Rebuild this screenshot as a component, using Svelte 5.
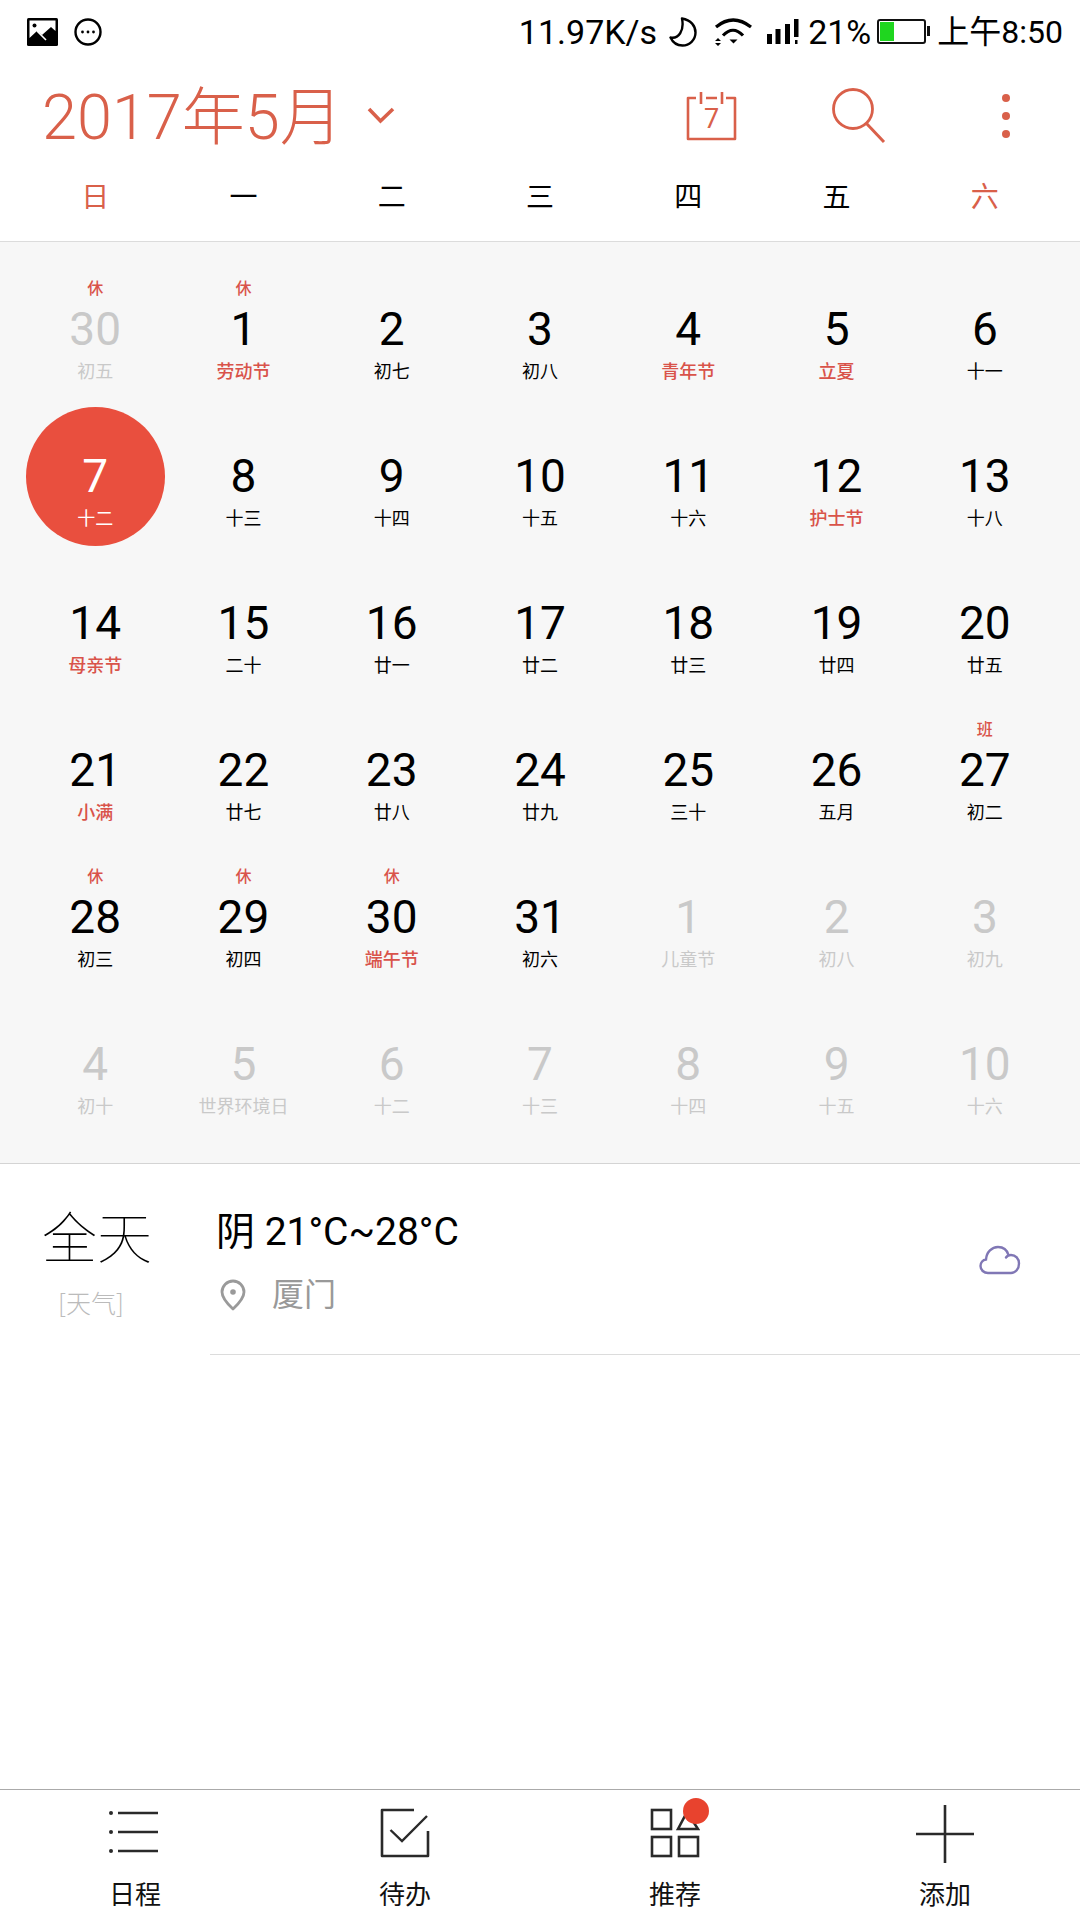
<script lang="ts">
    type Day = { n: number; lunar: string; tag?: string; festive?: boolean; muted?: boolean; today?: boolean };

    const weekdays = ['日', '一', '二', '三', '四', '五', '六'];

    const days: Day[] = [
        { n: 30, lunar: '初五', tag: '休', muted: true },
        { n: 1, lunar: '劳动节', tag: '休', festive: true },
        { n: 2, lunar: '初七' },
        { n: 3, lunar: '初八' },
        { n: 4, lunar: '青年节', festive: true },
        { n: 5, lunar: '立夏', festive: true },
        { n: 6, lunar: '十一' },
        { n: 7, lunar: '十二', today: true },
        { n: 8, lunar: '十三' },
        { n: 9, lunar: '十四' },
        { n: 10, lunar: '十五' },
        { n: 11, lunar: '十六' },
        { n: 12, lunar: '护士节', festive: true },
        { n: 13, lunar: '十八' },
        { n: 14, lunar: '母亲节', festive: true },
        { n: 15, lunar: '二十' },
        { n: 16, lunar: '廿一' },
        { n: 17, lunar: '廿二' },
        { n: 18, lunar: '廿三' },
        { n: 19, lunar: '廿四' },
        { n: 20, lunar: '廿五' },
        { n: 21, lunar: '小满', festive: true },
        { n: 22, lunar: '廿七' },
        { n: 23, lunar: '廿八' },
        { n: 24, lunar: '廿九' },
        { n: 25, lunar: '三十' },
        { n: 26, lunar: '五月' },
        { n: 27, lunar: '初二', tag: '班' },
        { n: 28, lunar: '初三', tag: '休' },
        { n: 29, lunar: '初四', tag: '休' },
        { n: 30, lunar: '端午节', tag: '休', festive: true },
        { n: 31, lunar: '初六' },
        { n: 1, lunar: '儿童节', muted: true },
        { n: 2, lunar: '初八', muted: true },
        { n: 3, lunar: '初九', muted: true },
        { n: 4, lunar: '初十', muted: true },
        { n: 5, lunar: '世界环境日', muted: true },
        { n: 6, lunar: '十二', muted: true },
        { n: 7, lunar: '十三', muted: true },
        { n: 8, lunar: '十四', muted: true },
        { n: 9, lunar: '十五', muted: true },
        { n: 10, lunar: '十六', muted: true }
    ];
</script>

<div class="page">
    <div class="status">
        <div class="status-left">
            <svg width="31" height="28" viewBox="0 0 31 28">
                <rect x="0" y="0" width="31" height="28" rx="1.5" fill="#000" />
                <path d="M2.500 2.500h26v10.500L24 9l-9 8-5-4-7.500 7z" fill="#fff" />
                <circle cx="7.500" cy="7.500" r="2" fill="#000" />
                <path d="M10 13l9 9" stroke="#fff" stroke-width="1.600" fill="none" />
            </svg>
            <svg width="28" height="28" viewBox="0 0 28 28">
                <circle cx="14" cy="14" r="12.500" fill="none" stroke="#000" stroke-width="2.400" />
                <circle cx="8.500" cy="14" r="1.400" />
                <circle cx="14" cy="14" r="1.400" />
                <circle cx="19.500" cy="14" r="1.400" />
            </svg>
        </div>
        <div class="status-right">
            <span class="speed">11.97K/s</span>
            <svg class="moon" width="28" height="30" viewBox="0 0 28 30">
                <path d="M13 1.500C22 3 26.500 9 26.500 15.500 26.500 23 20.500 28.500 13.500 28.500 8 28.500 4 26 1.500 20.500 9.500 22 15.500 14 13 1.500z" fill="none" stroke="#000" stroke-width="2.400" stroke-linejoin="round" />
            </svg>
            <svg class="wifi" width="38" height="28" viewBox="0 0 38 28">
                <path d="M2 9Q19-5 37 9" fill="none" stroke="#000" stroke-width="3.200" />
                <path d="M9 17.500Q19 7 29 17.500" fill="none" stroke="#000" stroke-width="3.200" />
                <path d="M15.500 21.500h8l-4 4z" />
                <path d="M1 23l3-3 3 3zM1 25l3 3 3-3z" />
            </svg>
            <svg class="signal" width="32" height="26" viewBox="0 0 32 26">
                <rect x="0" y="15" width="5" height="10" />
                <rect x="8.500" y="10" width="5" height="15" />
                <rect x="18" y="5" width="5" height="20" />
                <rect x="27" y="0" width="4.500" height="18" />
                <rect x="28" y="21" width="2.500" height="4" />
            </svg>
            <span class="percent">21%</span>
            <div class="battery">
                <div class="battery-fill"></div>
            </div>
            <span class="clock">上午8:50</span>
        </div>
    </div>

    <header class="head">
        <div class="month">
            <span class="month-text">2017年5月</span>
            <svg class="chevron" width="28" height="18" viewBox="0 0 28 18">
                <path d="M2 3l11.500 12L26 3" fill="none" stroke="#d9604a" stroke-width="3.600" />
            </svg>
        </div>
        <div class="actions">
            <svg class="today-icon" width="51" height="50" viewBox="0 0 51 50">
                <path d="M10 7H2v41h47V7h-9M20 7h11" fill="none" stroke="#d9604a" stroke-width="2.600" stroke-linejoin="round" />
                <path d="M15 1v12M36 1v12" stroke="#d9604a" stroke-width="2.600" />
                <text x="25.500" y="37" text-anchor="middle" class="today-num">7</text>
            </svg>
            <svg class="search-icon" width="54" height="56" viewBox="0 0 54 56">
                <circle cx="21" cy="21" r="19.500" fill="none" stroke="#d9604a" stroke-width="2.800" />
                <path d="M34.500 35.500L52 54" stroke="#d9604a" stroke-width="3" />
            </svg>
            <svg class="more-icon" width="12" height="48" viewBox="0 0 12 48">
                <circle cx="6" cy="6" r="4" fill="#d9604a" />
                <circle cx="6" cy="24" r="4" fill="#d9604a" />
                <circle cx="6" cy="42" r="4" fill="#d9604a" />
            </svg>
        </div>
    </header>

    <div class="weekdays">
        {#each weekdays as w, i}
            <span class:weekend={i === 0 || i === 6}>{w}</span>
        {/each}
    </div>

    <section class="grid">
        {#each days as d}
            <div class="cell" class:muted={d.muted} class:today={d.today}>
                {#if d.today}<span class="dot"></span>{/if}
                <span class="tag">{d.tag ?? ''}</span>
                <span class="num">{d.n}</span>
                <span class="lunar" class:festive={d.festive}>{d.lunar}</span>
            </div>
        {/each}
    </section>

    <section class="event">
        <div class="allday">
            <span class="allday-title">全天</span>
            <span class="allday-sub">[天气]</span>
        </div>
        <div class="event-body">
            <div class="event-info">
                <div class="event-title">阴 21°C~28°C</div>
                <div class="event-place">
                    <svg width="26" height="32" viewBox="0 0 26 32">
                        <path d="M13 30C6.500 24 2 18.500 2 13a11 11 0 0 1 22 0c0 5.500-4.500 11-11 17z" fill="none" stroke="#9a9a9a" stroke-width="2.800" stroke-linejoin="round" />
                        <circle cx="13" cy="13" r="2.800" fill="#9a9a9a" />
                    </svg>
                    <span>厦门</span>
                </div>
            </div>
            <svg class="cloud" width="42" height="30" viewBox="0 0 42 30">
                <path d="M27 12.500c1-1.500 3-2.500 5-2.500 4.500 0 8 3.500 8 8.500 0 5.500-3.500 9.500-8 9.500H9c-4 0-7.500-3-7.500-7 0-3.500 2.500-6 5.500-6.500C7.500 7 13 2 19 2c5 0 9 3 10.500 8" fill="none" stroke="#8077b5" stroke-width="2.400" stroke-linecap="round" />
            </svg>
        </div>
    </section>

    <nav class="tabs">
        <div class="tab">
            <svg class="list-icon" width="50" height="50" viewBox="0 0 50 50">
                <circle cx="3" cy="5" r="2" fill="#2a2a2a" />
                <circle cx="3" cy="24" r="2" fill="#2a2a2a" />
                <circle cx="3" cy="43" r="2" fill="#2a2a2a" />
                <path d="M10 5h40M10 24h40M10 43h40" stroke="#2a2a2a" stroke-width="2.400" />
            </svg>
            <span>日程</span>
        </div>
        <div class="tab">
            <svg width="50" height="50" viewBox="0 0 50 50">
                <path d="M34 2H2v46h46V23" fill="none" stroke="#2a2a2a" stroke-width="2.600" stroke-linejoin="round" />
                <path d="M10.500 22L22 33 47 8" fill="none" stroke="#2a2a2a" stroke-width="2.400" />
            </svg>
            <span>待办</span>
        </div>
        <div class="tab">
            <div class="apps">
                <svg width="50" height="50" viewBox="0 0 50 50">
                    <rect x="2" y="2" width="19" height="19" fill="none" stroke="#2a2a2a" stroke-width="2.600" />
                    <path d="M28 21l9-17 11 17z" fill="none" stroke="#2a2a2a" stroke-width="2.600" />
                    <rect x="2" y="29" width="19" height="19" fill="none" stroke="#2a2a2a" stroke-width="2.600" />
                    <rect x="29" y="29" width="19" height="19" fill="none" stroke="#2a2a2a" stroke-width="2.600" />
                </svg>
                <span class="badge"></span>
            </div>
            <span>推荐</span>
        </div>
        <div class="tab">
            <svg width="58" height="58" class="plus" viewBox="0 0 58 58">
                <path d="M0 29h58M29 0v58" stroke="#2a2a2a" stroke-width="2.600" />
            </svg>
            <span>添加</span>
        </div>
    </nav>
</div>

<style>
    :global(body) {
        margin: 0;
        background: #fff;
    }

    .page {
        width: 1080px;
        height: 1920px;
        display: flex;
        flex-direction: column;
        font-family: Roboto, "Noto Sans CJK SC", sans-serif;
        color: #000;
        overflow: hidden;
    }

    .status {
        height: 60px;
        display: flex;
        justify-content: space-between;
        align-items: center;
        padding: 3px 17px 0 27px;
        box-sizing: border-box;
    }

    .status-left {
        display: flex;
        align-items: center;
        gap: 16px;
    }

    .status-right {
        display: flex;
        align-items: center;
        font-size: 34px;
        line-height: 40px;
        white-space: nowrap;
    }

    .moon {
        margin-left: 12px;
    }

    .wifi {
        margin-left: 17px;
    }

    .signal {
        margin-left: 15px;
    }

    .percent {
        margin-left: 9px;
    }

    .battery {
        width: 49px;
        height: 25px;
        margin-left: 6px;
        margin-right: 11px;
        border: 2.500px solid #111;
        border-radius: 3px;
        box-sizing: border-box;
        padding: 1px;
        position: relative;
    }

    .battery::after {
        content: '';
        position: absolute;
        right: -6px;
        top: 5px;
        width: 3px;
        height: 10px;
        background: #111;
    }

    .battery-fill {
        width: 32%;
        height: 100%;
        background: #1fd61f;
    }

    .clock {
        font-size: 32px;
    }

    .head {
        height: 112px;
        display: flex;
        justify-content: space-between;
        align-items: center;
        padding: 4px 68px 0 42px;
        box-sizing: border-box;
    }

    .month {
        display: flex;
        align-items: center;
    }

    .month-text {
        font-size: 63px;
        font-weight: 300;
        line-height: 84px;
        color: #d9604a;
    }

    .chevron {
        margin-left: 24px;
        margin-top: -6px;
    }

    .actions {
        display: flex;
        align-items: center;
        margin-top: -4px;
    }

    .today-num {
        font-family: Roboto, sans-serif;
        font-size: 27px;
        fill: #d9604a;
    }

    .today-icon {
        margin-right: 95px;
    }

    .search-icon {
        margin-right: 114px;
    }

    .weekdays {
        height: 70px;
        display: grid;
        grid-template-columns: repeat(7, 1fr);
        padding: 0 21px 23px;
        box-sizing: border-box;
        align-items: center;
        font-family: "Noto Sans CJK SC", sans-serif;
        font-size: 28px;
        text-align: center;
        border-bottom: 1px solid #dcdcdc;
    }

    .weekend {
        color: #d9604a;
    }

    .grid {
        height: 922px;
        box-sizing: border-box;
        display: grid;
        grid-template-columns: repeat(7, 1fr);
        grid-auto-rows: 147px;
        padding: 14px 21px 0;
        background: #f7f7f7;
        border-bottom: 1px solid #d4d4d4;
    }

    .cell {
        position: relative;
        display: flex;
        flex-direction: column;
        align-items: center;
        padding-top: 21px;
        box-sizing: border-box;
    }

    .dot {
        position: absolute;
        left: 50%;
        top: 4px;
        width: 139px;
        height: 139px;
        margin-left: -69.500px;
        border-radius: 50%;
        background: #e94f3e;
    }

    .tag {
        height: 20px;
        line-height: 20px;
        font-size: 16px;
        font-weight: 500;
        font-family: "Noto Sans CJK SC", sans-serif;
        color: #d9534a;
    }

    .num {
        position: relative;
        margin-top: 1px;
        height: 61px;
        line-height: 62px;
        font-size: 46px;
    }

    .lunar {
        position: relative;
        height: 22px;
        line-height: 22px;
        font-size: 18px;
        font-family: "Noto Sans CJK SC", sans-serif;
        white-space: nowrap;
    }

    .lunar.festive {
        color: #d9534a;
        font-weight: 500;
    }

    .muted .num,
    .muted .lunar {
        color: #c9c9c9;
    }

    .today .num,
    .today .lunar {
        color: #fff;
    }

    .event {
        display: flex;
        height: 191px;
    }

    .allday {
        width: 210px;
        flex: none;
        display: flex;
        flex-direction: column;
        align-items: flex-start;
        padding: 38px 0 0 42px;
        box-sizing: border-box;
        font-family: "Noto Sans CJK SC", sans-serif;
        font-weight: 100;
    }

    .allday-title {
        font-size: 55px;
        line-height: 64px;
    }

    .allday-sub {
        margin: 18px 0 0 16px;
        font-size: 25px;
        line-height: 36px;
        font-weight: 300;
        color: #bbb;
    }

    .event-body {
        flex: 1;
        display: flex;
        justify-content: space-between;
        padding: 42px 59px 0 6px;
        border-bottom: 1px solid #dcdcdc;
    }

    .event-title {
        font-size: 39px;
        line-height: 52px;
    }

    .event-place {
        display: flex;
        align-items: center;
        margin-top: 15px;
        font-size: 32px;
        line-height: 44px;
        color: #999;
    }

    .event-place svg {
        margin-left: 4px;
    }

    .event-place span {
        margin-left: 26px;
    }

    .cloud {
        margin-top: 39px;
    }

    .tabs {
        margin-top: auto;
        height: 131px;
        box-sizing: border-box;
        display: grid;
        grid-template-columns: repeat(4, 1fr);
        border-top: 1px solid #aaa;
    }

    .tab {
        display: flex;
        flex-direction: column;
        align-items: center;
        justify-content: flex-end;
        padding-bottom: 9px;
        font-family: "Noto Sans CJK SC", sans-serif;
        font-size: 26px;
        line-height: 36px;
        color: #111;
    }

    .tab > svg,
    .apps {
        margin-bottom: 17px;
    }

    .list-icon {
        margin-right: 4px;
    }

    .plus {
        margin-bottom: 12px !important;
    }

    .apps {
        position: relative;
        height: 50px;
    }

    .badge {
        position: absolute;
        left: 33px;
        top: -10px;
        width: 26px;
        height: 26px;
        border-radius: 50%;
        background: #e8432e;
    }
</style>
